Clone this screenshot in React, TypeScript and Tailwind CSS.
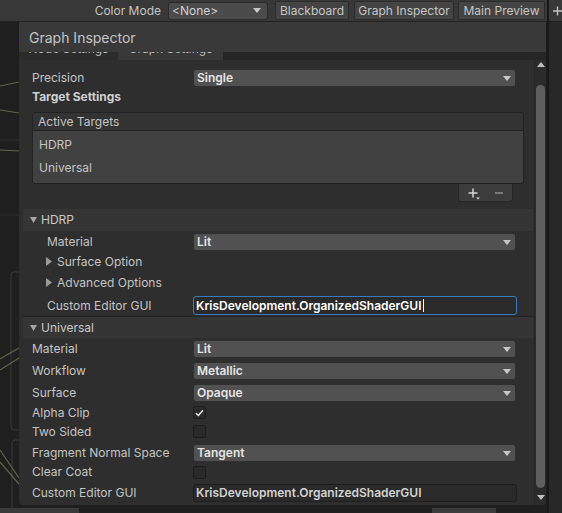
import type { ReactNode } from "react";

function Caret() {
  return (
    <svg width="8" height="5" viewBox="0 0 8 5" className="shrink-0">
      <path d="M0 0H8L4 5Z" fill="#c8c8c8" />
    </svg>
  );
}

function Tri({ open }: { open: boolean }) {
  return open ? (
    <svg width="7" height="6" viewBox="0 0 7 6" className="shrink-0">
      <path d="M0 0H7L3.5 6Z" fill="#a6a6a6" />
    </svg>
  ) : (
    <svg width="6" height="9" viewBox="0 0 6 9" className="shrink-0">
      <path d="M0 0L6 4.5L0 9Z" fill="#9a9a9a" />
    </svg>
  );
}

function Dropdown({ value }: { value: string }) {
  return (
    <div className="flex h-[18px] w-[323px] items-center justify-between rounded-[3px] border border-[#2f2f2f] bg-[#515151] pl-[3px] pr-[4px] font-semibold text-[#e4e4e4]">
      <span>{value}</span>
      <Caret />
    </div>
  );
}

function Check({ on = false }: { on?: boolean }) {
  return (
    <div className="flex h-[13px] w-[13px] items-center justify-center rounded-[2px] border border-[#1d1d1d] bg-[#2a2a2a]">
      {on && (
        <svg width="9" height="8" viewBox="0 0 9 8">
          <path d="M1 4.2L3.4 6.5L8 1.2" stroke="#e8e8e8" strokeWidth="1.5" fill="none" />
        </svg>
      )}
    </div>
  );
}

function Row({
  label,
  pad = "pl-[13px]",
  className = "h-[18px]",
  children,
}: {
  label: ReactNode;
  pad?: string;
  className?: string;
  children?: ReactNode;
}) {
  return (
    <div className={`flex items-center ${className}`}>
      <span className={`w-[174px] shrink-0 ${pad}`}>{label}</span>
      {children}
    </div>
  );
}

function Section({ title, className = "" }: { title: string; className?: string }) {
  return (
    <div className={`ml-[4px] flex h-[22px] w-[510px] items-center bg-[#353535] pl-[7px] text-[#c8c8c8] ${className}`}>
      <Tri open />
      <span className="ml-[4px]">{title}</span>
    </div>
  );
}

function Foldout({ label }: { label: string }) {
  return (
    <div className="flex h-[21px] items-center pl-[27px]">
      <Tri open={false} />
      <span className="ml-[5px]">{label}</span>
    </div>
  );
}

function ToolBtn({ className, children }: { className: string; children: ReactNode }) {
  return (
    <div className={`flex h-[19px] items-center justify-center rounded-[2px] border border-[#2c2c2c] bg-[#444444] ${className}`}>
      {children}
    </div>
  );
}

function GraphLines() {
  return (
    <svg className="absolute inset-0" width="547" height="491" viewBox="0 0 547 491">
      <g stroke="#2c2c2c" strokeWidth="1" fill="none">
        <path d="M0 118H19" />
        <path d="M0 193H19" />
      </g>
      <g stroke="#3a3a3a" strokeWidth="1" fill="none">
        <path d="M19 250H14Q11 250 11 253V405Q11 408 14 408H19" />
        <path d="M19 418H15Q12 418 12 421V491" />
      </g>
      <g stroke="#5e6549" strokeWidth="1.2" fill="none">
        <path d="M0 64L19 60" />
        <path d="M0 88L19 91" />
        <path d="M0 128L19 129" />
        <path d="M0 337L19 326" />
        <path d="M0 348L19 336" />
        <path d="M0 428L19 456" />
        <path d="M0 440L19 462" />
      </g>
    </svg>
  );
}

export default function App() {
  return (
    <div className="flex h-[513px] w-[562px] overflow-hidden bg-[#1f1f1f] font-['Inter','Noto_Sans',sans-serif] text-[12px] text-[#c4c4c4]">
      <div className="flex flex-1 flex-col">
        {/* toolbar */}
        <div className="flex h-[22px] shrink-0 items-center justify-end border-b border-[#232323] bg-[#383838] pr-[2px]">
          <span className="mr-[7px]">Color Mode</span>
          <div className="mr-[7px] flex h-[18px] w-[100px] items-center justify-between rounded-[3px] border border-[#2b2b2b] bg-[#4b4b4b] pl-[3px] pr-[6px] text-[#d0d0d0]">
            <span>&lt;None&gt;</span>
            <Caret />
          </div>
          <ToolBtn className="mr-[5px] w-[74px]">Blackboard</ToolBtn>
          <ToolBtn className="mr-[4px] w-[100px]">Graph Inspector</ToolBtn>
          <ToolBtn className="w-[87px]">Main Preview</ToolBtn>
        </div>

        {/* graph canvas */}
        <div className="relative flex flex-1 flex-col">
          <GraphLines />

          <div className="relative ml-[19px] flex h-[483px] w-[528px] flex-col overflow-hidden rounded-b-[4px] border-r border-[#1c1c1c] bg-[#2e2e2e]">
            <div className="flex h-[30px] shrink-0 items-center bg-[#393939] pl-[10px] text-[14px] text-[#c4c4c4]">
              Graph Inspector
            </div>
            {/* tab strip, scrolled almost out of view */}
            <div className="flex h-[8px] shrink-0 overflow-hidden bg-[#262626] text-[#bdbdbd]">
              <div className="flex w-[99px] justify-center bg-[#2c2c2c]">
                <span className="-mt-[10px] leading-[14px]">Node Settings</span>
              </div>
              <div className="flex w-[105px] justify-center bg-[#383838]">
                <span className="-mt-[10px] leading-[14px]">Graph Settings</span>
              </div>
            </div>

            <div className="flex flex-1 overflow-hidden">
              <div className="flex-1 overflow-hidden pt-[9px]">
                <Row label="Precision">
                  <Dropdown value="Single" />
                </Row>
                <div className="mt-[1px] flex h-[18px] items-center pl-[13px] font-bold text-[#cfcfcf]">
                  Target Settings
                </div>

                <div className="ml-[13px] mt-[6px] w-[492px]">
                  <div className="overflow-hidden rounded-[3px] border border-[#232323]">
                    <div className="flex h-[18px] items-center border-b border-[#232323] bg-[#333333] pl-[5px]">
                      Active Targets
                    </div>
                    <div className="h-[52px] bg-[#414141] pt-[2px]">
                      <div className="flex h-[23px] items-center pl-[6px]">HDRP</div>
                      <div className="flex h-[23px] items-center pl-[6px]">Universal</div>
                    </div>
                  </div>
                  <div className="ml-auto mr-[11px] h-[18px] w-[55px] rounded-b-[3px] border border-t-0 border-[#262626] bg-[#3c3c3c]">
                    <svg width="55" height="18" viewBox="0 0 55 18">
                      <path d="M9.5 9H18.5M14 4.5V13.5" stroke="#d4d4d4" strokeWidth="1.5" />
                      <path d="M17 13.5H21L19 15.5Z" fill="#d4d4d4" />
                      <path d="M36 9H44" stroke="#8a8a8a" strokeWidth="1.5" />
                    </svg>
                  </div>
                </div>

                <Section title="HDRP" className="mt-[7px]" />
                <Row label="Material" pad="pl-[28px]" className="mt-[2px] h-[18px]">
                  <Dropdown value="Lit" />
                </Row>
                <Foldout label="Surface Option" />
                <Foldout label="Advanced Options" />
                <Row label="Custom Editor GUI" pad="pl-[28px]" className="mt-[3px] h-[19px]">
                  <div className="flex h-[19px] w-[324px] items-center rounded-[3px] border border-[#3a79bb] bg-[#2a2a2a] pl-[2px] font-semibold text-white">
                    <span>KrisDevelopment.OrganizedShaderGUI</span>
                    <span className="ml-[1px] inline-block h-[13px] w-px bg-white" />
                  </div>
                </Row>

                <Section title="Universal" className="mt-[1px] border-t border-[#232323]" />
                <Row label="Material" className="mt-[2px] h-[18px]">
                  <Dropdown value="Lit" />
                </Row>
                <Row label="Workflow" className="mt-[4px] h-[18px]">
                  <Dropdown value="Metallic" />
                </Row>
                <Row label="Surface" className="mt-[4px] h-[18px]">
                  <Dropdown value="Opaque" />
                </Row>
                <Row label="Alpha Clip" className="mt-[1px] h-[19px]">
                  <Check on />
                </Row>
                <Row label="Two Sided" className="h-[19px]">
                  <Check />
                </Row>
                <Row label="Fragment Normal Space" className="mt-[3px] h-[18px]">
                  <Dropdown value="Tangent" />
                </Row>
                <Row label="Clear Coat" className="h-[20px]">
                  <Check />
                </Row>
                <Row label="Custom Editor GUI" className="mt-[2px] h-[18px]">
                  <div className="flex h-[18px] w-[324px] items-center rounded-[3px] border border-[#1f1f1f] bg-[#2a2a2a] pl-[2px] font-semibold text-[#d2d2d2]">
                    KrisDevelopment.OrganizedShaderGUI
                  </div>
                </Row>
              </div>

              {/* scrollbar */}
              <div className="flex w-[12px] shrink-0 flex-col items-center border-l border-[#272727] bg-[#2b2b2b] pb-[5px] pt-[2px]">
                <svg width="8" height="5" viewBox="0 0 8 5">
                  <path d="M0 5H8L4 0Z" fill="#c0c0c0" />
                </svg>
                <div className="mb-[7px] mt-[18px] w-[9px] flex-1 rounded-full bg-[#5e5e5e]" />
                <svg width="8" height="5" viewBox="0 0 8 5">
                  <path d="M0 0H8L4 5Z" fill="#c0c0c0" />
                </svg>
              </div>
            </div>
          </div>

          <div className="relative mt-[3px] flex h-[5px]">
            <div className="w-[79px] bg-[#3a3a3a]" />
            <div className="ml-[353px] w-[64px] bg-[#3c3c3c]" />
          </div>
        </div>
      </div>

      <div className="w-[2px] bg-[#191919]" />

      <div className="flex w-[13px] flex-col bg-[#282828]">
        <div className="flex h-[22px] items-center justify-center border-b border-[#232323] bg-[#383838]">
          <svg width="10" height="10" viewBox="0 0 10 10" className="ml-[4px]">
            <path d="M0 5H10M5 0V10" stroke="#c4c4c4" strokeWidth="1.5" />
          </svg>
        </div>
      </div>
    </div>
  );
}
